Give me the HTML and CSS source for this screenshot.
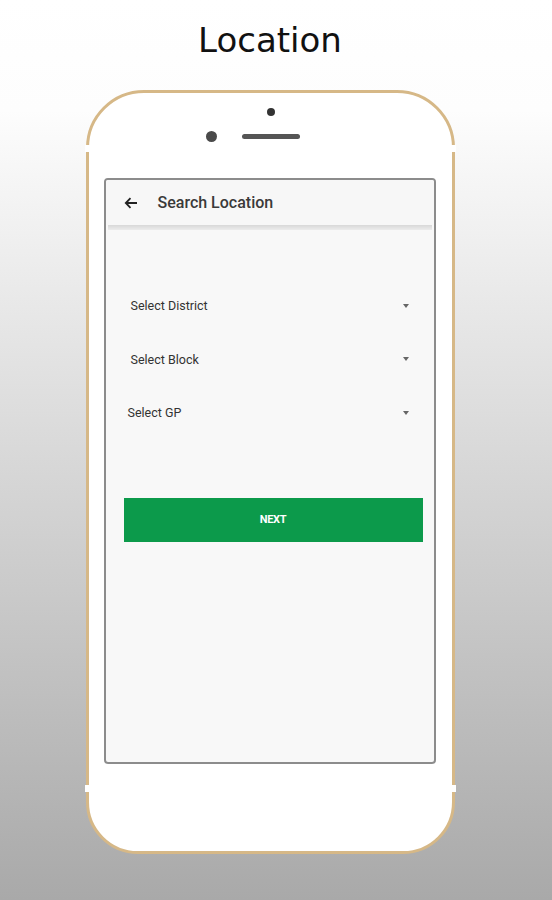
FILE: index.html
```html
<!DOCTYPE html>
<html>
<head>
  <meta name="viewport" content="width=device-width, initial-scale=1">
  <link rel="stylesheet" href="styles.css">
</head>
<body>
  <div class="page">
    <h1 class="title">Location</h1>

    <div class="phone">
      <span class="band band-tl"></span>
      <span class="band band-tr"></span>
      <span class="band band-bl"></span>
      <span class="band band-br"></span>

      <div class="earpiece">
        <span class="sensor"></span>
        <div class="ear-row">
          <span class="camera"></span>
          <span class="speaker"></span>
        </div>
      </div>

      <div class="screen">
        <div class="appbar">
          <svg class="back" width="14" height="12" viewBox="0 0 14 12">
            <path d="M13 6H2M6.5 1.2L1.8 6l4.7 4.8" fill="none" stroke="#222" stroke-width="1.8"/>
          </svg>
          <span class="appbar-title">Search Location</span>
        </div>
        <div class="appbar-shadow"></div>

        <div class="content">
          <div class="select">
            <span>Select District</span>
            <span class="caret"></span>
          </div>
          <div class="select">
            <span>Select Block</span>
            <span class="caret"></span>
          </div>
          <div class="select select-gp">
            <span>Select GP</span>
            <span class="caret"></span>
          </div>

          <button class="next">NEXT</button>
        </div>
      </div>
    </div>
  </div>
</body>
</html>
```

FILE: styles.css
```css
html, body { margin: 0; height: 100%; }
body {
  background: linear-gradient(#ffffff 0px, #fdfdfd 110px, #a9a9a9 900px);
  font-family: Roboto, "Liberation Sans", Arial, sans-serif;
}

.page {
  width: 552px;
  height: 900px;
  display: flex;
  flex-direction: column;
  align-items: center;
}

.title {
  margin: 20px 12px 0 0;
  height: 70px;
  font-family: "DejaVu Sans", Verdana, sans-serif;
  font-weight: normal;
  font-size: 34px;
  line-height: 40px;
  color: #111;
}

.phone {
  position: relative;
  box-sizing: border-box;
  width: 369px;
  height: 764px;
  margin-right: 12px;
  border: 3px solid #d6b887;
  border-radius: 58px 58px 52px 52px;
  background: #fff;
  display: flex;
  flex-direction: column;
  align-items: center;
}

/* white antenna gaps in the frame */
.band {
  position: absolute;
  width: 5px;
  height: 7px;
  background: #fff;
}
.band-tl { left: -4px; top: 52px; }
.band-tr { right: -4px; top: 52px; }
.band-bl { left: -4px; top: 692px; }
.band-br { right: -4px; top: 692px; }

.earpiece {
  display: flex;
  flex-direction: column;
  align-items: center;
  padding-top: 15px;
  height: 72px;
  box-sizing: border-box;
  width: 100%;
}
.sensor {
  width: 8px;
  height: 8px;
  border-radius: 50%;
  background: #333;
  margin-left: 1px;
}
.ear-row {
  display: flex;
  align-items: center;
  gap: 25px;
  margin-top: 15px;
  margin-left: -34px;
}
.camera {
  width: 11px;
  height: 11px;
  border-radius: 50%;
  background: #4a4a4a;
}
.speaker {
  width: 58px;
  height: 5px;
  border-radius: 3px;
  background: #555;
}

.screen {
  box-sizing: border-box;
  width: 332px;
  height: 586px;
  margin: 13px 0 0 -1px;
  border: 2px solid #8c8c8c;
  border-radius: 4px;
  background: #f8f8f8;
  overflow: hidden;
}

.appbar {
  height: 45px;
  display: flex;
  align-items: center;
  background: #f7f7f7;
}
.back { margin-left: 18px; }
.appbar-title {
  margin-left: 20px;
  font-size: 16px;
  font-weight: 500;
  color: #3a3a3a;
}
.appbar-shadow {
  height: 5px;
  margin: 0 2px;
  background: linear-gradient(#d8d8d8, #ececec);
}

.content {
  display: flex;
  flex-direction: column;
  padding-top: 49px;
}

.select {
  height: 53.5px;
  display: flex;
  align-items: center;
  justify-content: space-between;
  padding: 0 25px 0 25px;
  font-size: 12.5px;
  color: #333;
}
.select-gp { padding-left: 22px; }
.caret {
  width: 0;
  height: 0;
  border-left: 3.5px solid transparent;
  border-right: 3.5px solid transparent;
  border-top: 4px solid #666;
}

.next {
  margin: 58px 11px 0 18px;
  height: 44px;
  border: none;
  background: #0c9a4b;
  color: #fff;
  font-family: Roboto, "Liberation Sans", Arial, sans-serif;
  font-size: 11px;
  font-weight: bold;
  letter-spacing: -0.3px;
  cursor: pointer;
}
```
